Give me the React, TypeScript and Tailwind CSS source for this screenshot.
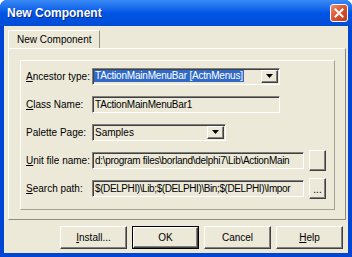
const raised =
  "bg-[#ECE9D8] border border-t-white border-l-white border-r-[#404040] border-b-[#404040] shadow-[inset_-1px_-1px_0_#808080]";
const sunken =
  "border border-t-[#808080] border-l-[#808080] border-r-white border-b-white shadow-[inset_1px_1px_0_#404040]";

function Arrow() {
  return (
    <svg width="7" height="4" viewBox="0 0 7 4">
      <path d="M0 0h7L3.5 4z" fill="#000" />
    </svg>
  );
}

function Combo({ width, children }: { width: string; children: React.ReactNode }) {
  return (
    <div className={`${sunken} ${width} h-[17px] flex items-center pl-[1px] pr-[1px]`}>
      <div className="flex-1 flex items-center overflow-hidden whitespace-nowrap">{children}</div>
      <div className={`${raised} w-[17px] h-[13px] flex items-center justify-center`}>
        <Arrow />
      </div>
    </div>
  );
}

function Row({ label, children }: { label: React.ReactNode; children: React.ReactNode }) {
  return (
    <div className="h-[28px] flex items-center">
      <div className="w-[66px] whitespace-nowrap">{label}</div>
      {children}
    </div>
  );
}

export default function App() {
  return (
    <div className="w-[352px] h-[257px] flex flex-col bg-[#0046D5] font-['Liberation_Sans',Arial,sans-serif] text-[10px] text-black overflow-hidden rounded-t-[7px]">
      <div className="h-[26px] shrink-0 flex items-center pl-[7px] pr-[4px] bg-gradient-to-b from-[#3A8AF5] via-[#0055E5] to-[#004CD6]">
        <span className="text-white font-bold text-[12px] [text-shadow:1px_1px_0_#0A2A8A]">New Component</span>
        <div className="ml-auto w-[18px] h-[18px] rounded-[3px] border border-white bg-gradient-to-br from-[#EE8B6C] via-[#D8532F] to-[#BF3A18] flex items-center justify-center">
          <svg width="10" height="10" viewBox="0 0 10 10">
            <path d="M1.5 1.5l7 7M8.5 1.5l-7 7" stroke="#fff" strokeWidth="2" strokeLinecap="square" />
          </svg>
        </div>
      </div>
      <div className="flex-1 mx-[4px] mb-[4px] bg-[#ECE9D8] flex flex-col">
        <div className="pl-[4px] pt-[4px] flex">
          <div className="h-[18px] px-[8px] flex items-center border-t border-l border-t-white border-l-white border-r border-r-[#8F8C80]">
            New Component
          </div>
        </div>
        <div className="ml-[4px] mr-[2px] h-[172px] border border-t-white border-l-white border-r-[#8F8C80] border-b-[#8F8C80] pt-[11px] pl-[11px] pr-[10px] pb-[9px] flex">
          <div className="flex-1 border border-t-white border-l-white border-r-[#A5A294] border-b-[#A5A294] pl-[5px] pt-[1px] flex flex-col">
            <Row label={<><u>A</u>ncestor type:</>}>
              <Combo width="w-[188px]">
                <span className="bg-[#316AC5] text-white px-[1px] leading-[12px] tracking-[-0.2px]">TActionMainMenuBar [ActnMenus]</span>
              </Combo>
            </Row>
            <Row label={<><u>C</u>lass Name:</>}>
              <div className={`${sunken} w-[188px] h-[17px] flex items-center pl-[2px] whitespace-nowrap tracking-[-0.2px]`}>TActionMainMenuBar1</div>
            </Row>
            <Row label={<>Palette Page:</>}>
              <Combo width="w-[134px]">
                <span className="pl-[1px]">Samples</span>
              </Combo>
            </Row>
            <Row label={<><u>U</u>nit file name:</>}>
              <div className={`${sunken} w-[212px] h-[17px] flex items-center pl-[2px] whitespace-nowrap tracking-[-0.3px]`}>
                d:\program files\borland\delphi7\Lib\ActionMain
              </div>
              <div className={`${raised} ml-[5px] w-[17px] h-[21px]`} />
            </Row>
            <Row label={<><u>S</u>earch path:</>}>
              <div className={`${sunken} w-[212px] h-[17px] flex items-center pl-[2px] whitespace-nowrap tracking-[-0.4px]`}>
                $(DELPHI)\Lib;$(DELPHI)\Bin;$(DELPHI)\Impor
              </div>
              <div className={`${raised} ml-[5px] w-[17px] h-[21px] flex items-end justify-center pb-[3px] leading-none`}>...</div>
            </Row>
          </div>
        </div>
        <div className="flex justify-end gap-[5px] pr-[5px] mt-[6px]">
          <div className={`${raised} w-[67px] h-[23px] flex items-center justify-center`}>
            <span><u>I</u>nstall...</span>
          </div>
          <div className="w-[67px] h-[23px] border border-black flex">
            <div className={`${raised} flex-1 flex items-center justify-center`}>OK</div>
          </div>
          <div className={`${raised} w-[67px] h-[23px] flex items-center justify-center`}>Cancel</div>
          <div className={`${raised} w-[67px] h-[23px] flex items-center justify-center`}>
            <span><u>H</u>elp</span>
          </div>
        </div>
      </div>
    </div>
  );
}
